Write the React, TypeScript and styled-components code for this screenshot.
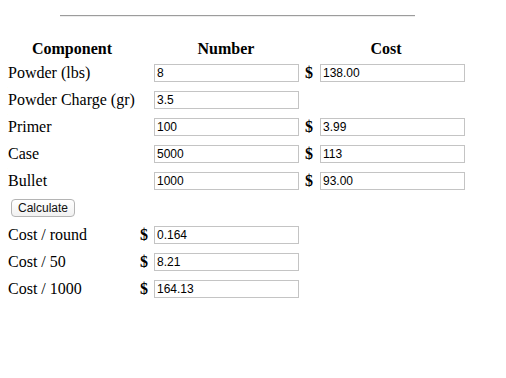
import {FC} from "react"
import styled, {createGlobalStyle} from "styled-components"

const GlobalStyle = createGlobalStyle`
    body {
        margin: 8px;
        background: #fff;
        color: #000;
        font-family: "Liberation Serif", "Times New Roman", serif;
        font-size: 16px;
    }
`

const Rule = styled.hr`
    width: 355px;
    margin: 7px 0 0 52px;
    border: none;
    border-top: 1px solid #9c9c9c;
    border-bottom: 1px solid #ededed;
    height: 0;
`

const Sheet = styled.div`
    margin-top: 21px;
    display: flex;
    flex-direction: column;
`

const Row = styled.div<{$height?: number}>`
    display: grid;
    grid-template-columns: 128px 16px 148px 18px 149px;
    align-items: center;
    height: ${p => p.$height ?? 27}px;
`

const Head = styled.div<{$span?: number, $shift?: number}>`
    grid-column: span ${p => p.$span ?? 1};
    font-weight: bold;
    text-align: center;
    padding-left: ${p => p.$shift ?? 0}px;
`

const Label = styled.div`
    white-space: nowrap;
`

const Dollar = styled.div`
    font-weight: bold;
    text-align: center;
`

const Cell = styled.div`
    padding-left: 2px;
`

const Field = styled.input`
    box-sizing: border-box;
    width: 145px;
    height: 18px;
    margin: 0;
    padding: 1px 2px;
    border: 1px solid #c4c4c4;
    font-family: "Liberation Sans", Arial, sans-serif;
    font-size: 12px;
    color: #000;
    background: #fff;
    outline: none;
`

const ButtonRow = styled.div`
    height: 27px;
    display: flex;
    align-items: center;
    padding-left: 3px;
`

const Button = styled.button`
    box-sizing: border-box;
    width: 64px;
    height: 18px;
    padding: 0;
    border: 1px solid #b4b4b4;
    border-radius: 4px;
    background: linear-gradient(#ffffff, #f1f1f1);
    font-family: "Liberation Sans", Arial, sans-serif;
    font-size: 12px;
    color: #111;
`

interface ItemProps {
    label: string,
    number: string,
    cost?: string
}

const Item: FC<ItemProps> = ({label, number, cost}) => (
    <Row>
        <Label>{label}</Label>
        <div/>
        <Cell><Field defaultValue={number}/></Cell>
        {cost !== undefined ? (
            <>
                <Dollar>$</Dollar>
                <Cell><Field defaultValue={cost}/></Cell>
            </>
        ) : null}
    </Row>
)

const Result: FC<{label: string, value: string}> = ({label, value}) => (
    <Row>
        <Label>{label}</Label>
        <Dollar>$</Dollar>
        <Cell><Field defaultValue={value}/></Cell>
    </Row>
)

const items: ItemProps[] = [
    {label: "Powder (lbs)", number: "8", cost: "138.00"},
    {label: "Powder Charge (gr)", number: "3.5"},
    {label: "Primer", number: "100", cost: "3.99"},
    {label: "Case", number: "5000", cost: "113"},
    {label: "Bullet", number: "1000", cost: "93.00"},
]

const results = [
    {label: "Cost / round", value: "0.164"},
    {label: "Cost / 50", value: "8.21"},
    {label: "Cost / 1000", value: "164.13"},
]

const App: FC = () => (
    <>
        <GlobalStyle/>
        <Rule/>
        <Sheet>
            <Row $height={21}>
                <Head>Component</Head>
                <div/>
                <Head>Number</Head>
                <Head $span={2} $shift={5}>Cost</Head>
            </Row>
            {items.map(item => <Item key={item.label} {...item}/>)}
            <ButtonRow>
                <Button>Calculate</Button>
            </ButtonRow>
            {results.map(r => <Result key={r.label} {...r}/>)}
        </Sheet>
    </>
)

export default App
